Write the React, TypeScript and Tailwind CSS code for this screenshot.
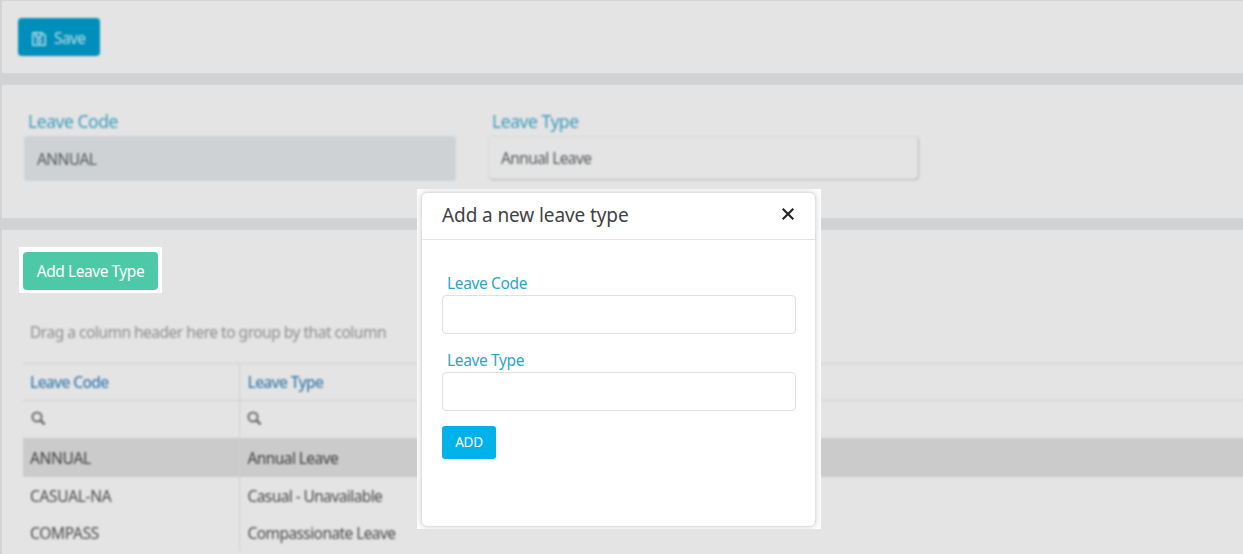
import { useState } from "react";
import { FaRegSave } from "react-icons/fa";

type LeaveType = { code: string; name: string };

const leaveTypes: LeaveType[] = [
  { code: "ANNUAL", name: "Annual Leave" },
  { code: "CASUAL-NA", name: "Casual - Unavailable" },
  { code: "COMPASS", name: "Compassionate Leave" },
];

const panel = "ml-[2px] bg-[#e4e4e4] shadow-[0_0_2px_#dadbdc]";

function SearchIcon() {
  return (
    <svg width="15" height="15" viewBox="0 0 15 15" fill="none" stroke="#6e6e6e" strokeWidth="2">
      <circle cx="6" cy="6" r="4.6" />
      <path d="M9.3 9.3 L13.6 13.4" strokeWidth="2.6" />
    </svg>
  );
}

function DialogField({ label }: { label: string }) {
  const [value, setValue] = useState("");
  return (
    <label className="block">
      <span className="block h-[22px] pl-[5px] text-[15.5px] leading-[20px] tracking-[-0.35px] text-[#2ba5cc]">{label}</span>
      <input
        value={value}
        onChange={(e) => setValue(e.target.value)}
        className="block h-[39px] w-[354px] rounded border border-[#dfe0e1] bg-white px-3 text-sm outline-none"
      />
    </label>
  );
}

function AddDialog() {
  return (
    <div className="absolute left-[417px] top-[189px] h-[340px] w-[404px] overflow-hidden bg-white pl-[4px] pt-[3px]">
      <div className="h-[335px] w-[395px] rounded-[6px] border border-[#dedfdf] bg-white shadow-[0_0_6px_#d0d1d1]">
        <div className="flex h-[47px] items-center justify-between border-b border-[#e3e4e4] pl-5 pr-[20px]">
          <h2 className="relative -top-px text-[19px] leading-[26px] tracking-[-0.1px] text-[#3f4244]">Add a new leave type</h2>
          <button aria-label="Close">
            <svg width="14" height="14" viewBox="0 0 14 14" stroke="#222" strokeWidth="2.1" className="relative -top-[2px]">
              <path d="M1.7 1.7 L12.3 12.3 M12.3 1.7 L1.7 12.3" />
            </svg>
          </button>
        </div>
        <div className="flex flex-col gap-[15.5px] pl-[20px] pt-[33px]">
          <DialogField label="Leave Code" />
          <DialogField label="Leave Type" />
          <button className="h-[33px] w-[54px] rounded-[3px] bg-[#00b2e8] text-[13.5px] tracking-[-0.2px] text-white">ADD</button>
        </div>
      </div>
    </div>
  );
}

export default function App() {
  const [selected, setSelected] = useState("ANNUAL");

  return (
    <div className="relative flex h-[554px] w-[1243px] flex-col gap-[12px] overflow-hidden bg-[#d0d2d3] pt-px font-['Noto_Sans','Open_Sans',sans-serif]">
      <section className={`${panel} h-[72px] shrink-0 pl-[16px] pt-[17px]`}>
        <button className="flex h-[38px] w-[82px] items-center gap-[7px] rounded-[4px] bg-[#008fba] pl-[13px] pt-[3px] text-[15.5px] tracking-[-0.6px] text-[#b9dfea] blur-[0.8px]">
          <FaRegSave size={16} />
          Save
        </button>
      </section>

      <section className={`${panel} h-[133px] shrink-0 pl-[22px] pt-[24px]`}>
        <div className="flex gap-[32px] blur-[0.8px]">
          <div>
            <div className="h-[27px] pl-[4px] text-[17.5px] leading-[25px] tracking-[-0.45px] text-[#3a9dbb]">Leave Code</div>
            <div className="flex h-[45px] w-[432px] items-center rounded-[4px] bg-[#ced2d5] pl-[13px] pt-[2px] text-[15.5px] tracking-[-0.55px] text-[#54595c]">ANNUAL</div>
          </div>
          <div>
            <div className="h-[27px] pl-[4px] text-[17.5px] leading-[25px] tracking-[-0.45px] text-[#3a9dbb]">Leave Type</div>
            <div className="flex h-[43px] w-[430px] items-center rounded-[4px] border border-[#dadada] bg-[#e4e4e4] pl-[12px] pt-[2px] text-[15.5px] tracking-[-0.6px] text-[#54595c] shadow-[1px_1px_2px_#bcbcbc]">Annual Leave</div>
          </div>
        </div>
      </section>

      <section className={`${panel} flex-1 pl-[17px] pt-[17px]`}>
        <div className="h-[46px] w-[143px] bg-white pl-[4px] pt-[5px]">
          <button className="h-[38px] w-[135px] rounded-[4px] bg-[#4dc9a8] pt-[2px] text-[15.5px] tracking-[-0.45px] text-white">Add Leave Type</button>
        </div>

        <div className="pl-[4px] text-[15.5px] blur-[0.8px]">
          <p className="h-[70px] pl-[7px] pt-[28px] leading-[22px] tracking-[-0.49px] text-[#8e8e8e]">
            Drag a column header here to group by that column
          </p>
          <table className="w-[1240px] table-fixed border-collapse text-left tracking-[-0.58px]">
            <colgroup>
              <col className="w-[216px]" />
              <col />
            </colgroup>
            <thead>
              <tr className="h-[37px] border-y border-[#d0d0d0] text-[#3c7dae]">
                <th className="border-r border-[#d0d0d0] pl-[7px] pt-px font-medium tracking-[-0.65px]">Leave Code</th>
                <th className="pl-[8px] pt-px font-medium tracking-[-0.65px]">Leave Type</th>
              </tr>
              <tr className="h-[37px]">
                <td className="border-r border-[#d0d0d0] pb-[2px] pl-[8px]"><SearchIcon /></td>
                <td className="pb-[2px] pl-[7px]"><SearchIcon /></td>
              </tr>
            </thead>
            <tbody>
              {leaveTypes.map((t) => (
                <tr
                  key={t.code}
                  onClick={() => setSelected(t.code)}
                  className={t.code === selected ? "h-[39px] bg-[#cbcbcb] text-[#3f3f3f]" : "h-[37px] text-[#4a4a4a]"}
                >
                  <td className="border-r border-[#d0d0d0] pl-[7px] pt-[3px] tracking-[-0.3px]">{t.code}</td>
                  <td className="pl-[8px] pt-[3px]">{t.name}</td>
                </tr>
              ))}
            </tbody>
          </table>
        </div>
      </section>

      <AddDialog />
    </div>
  );
}
